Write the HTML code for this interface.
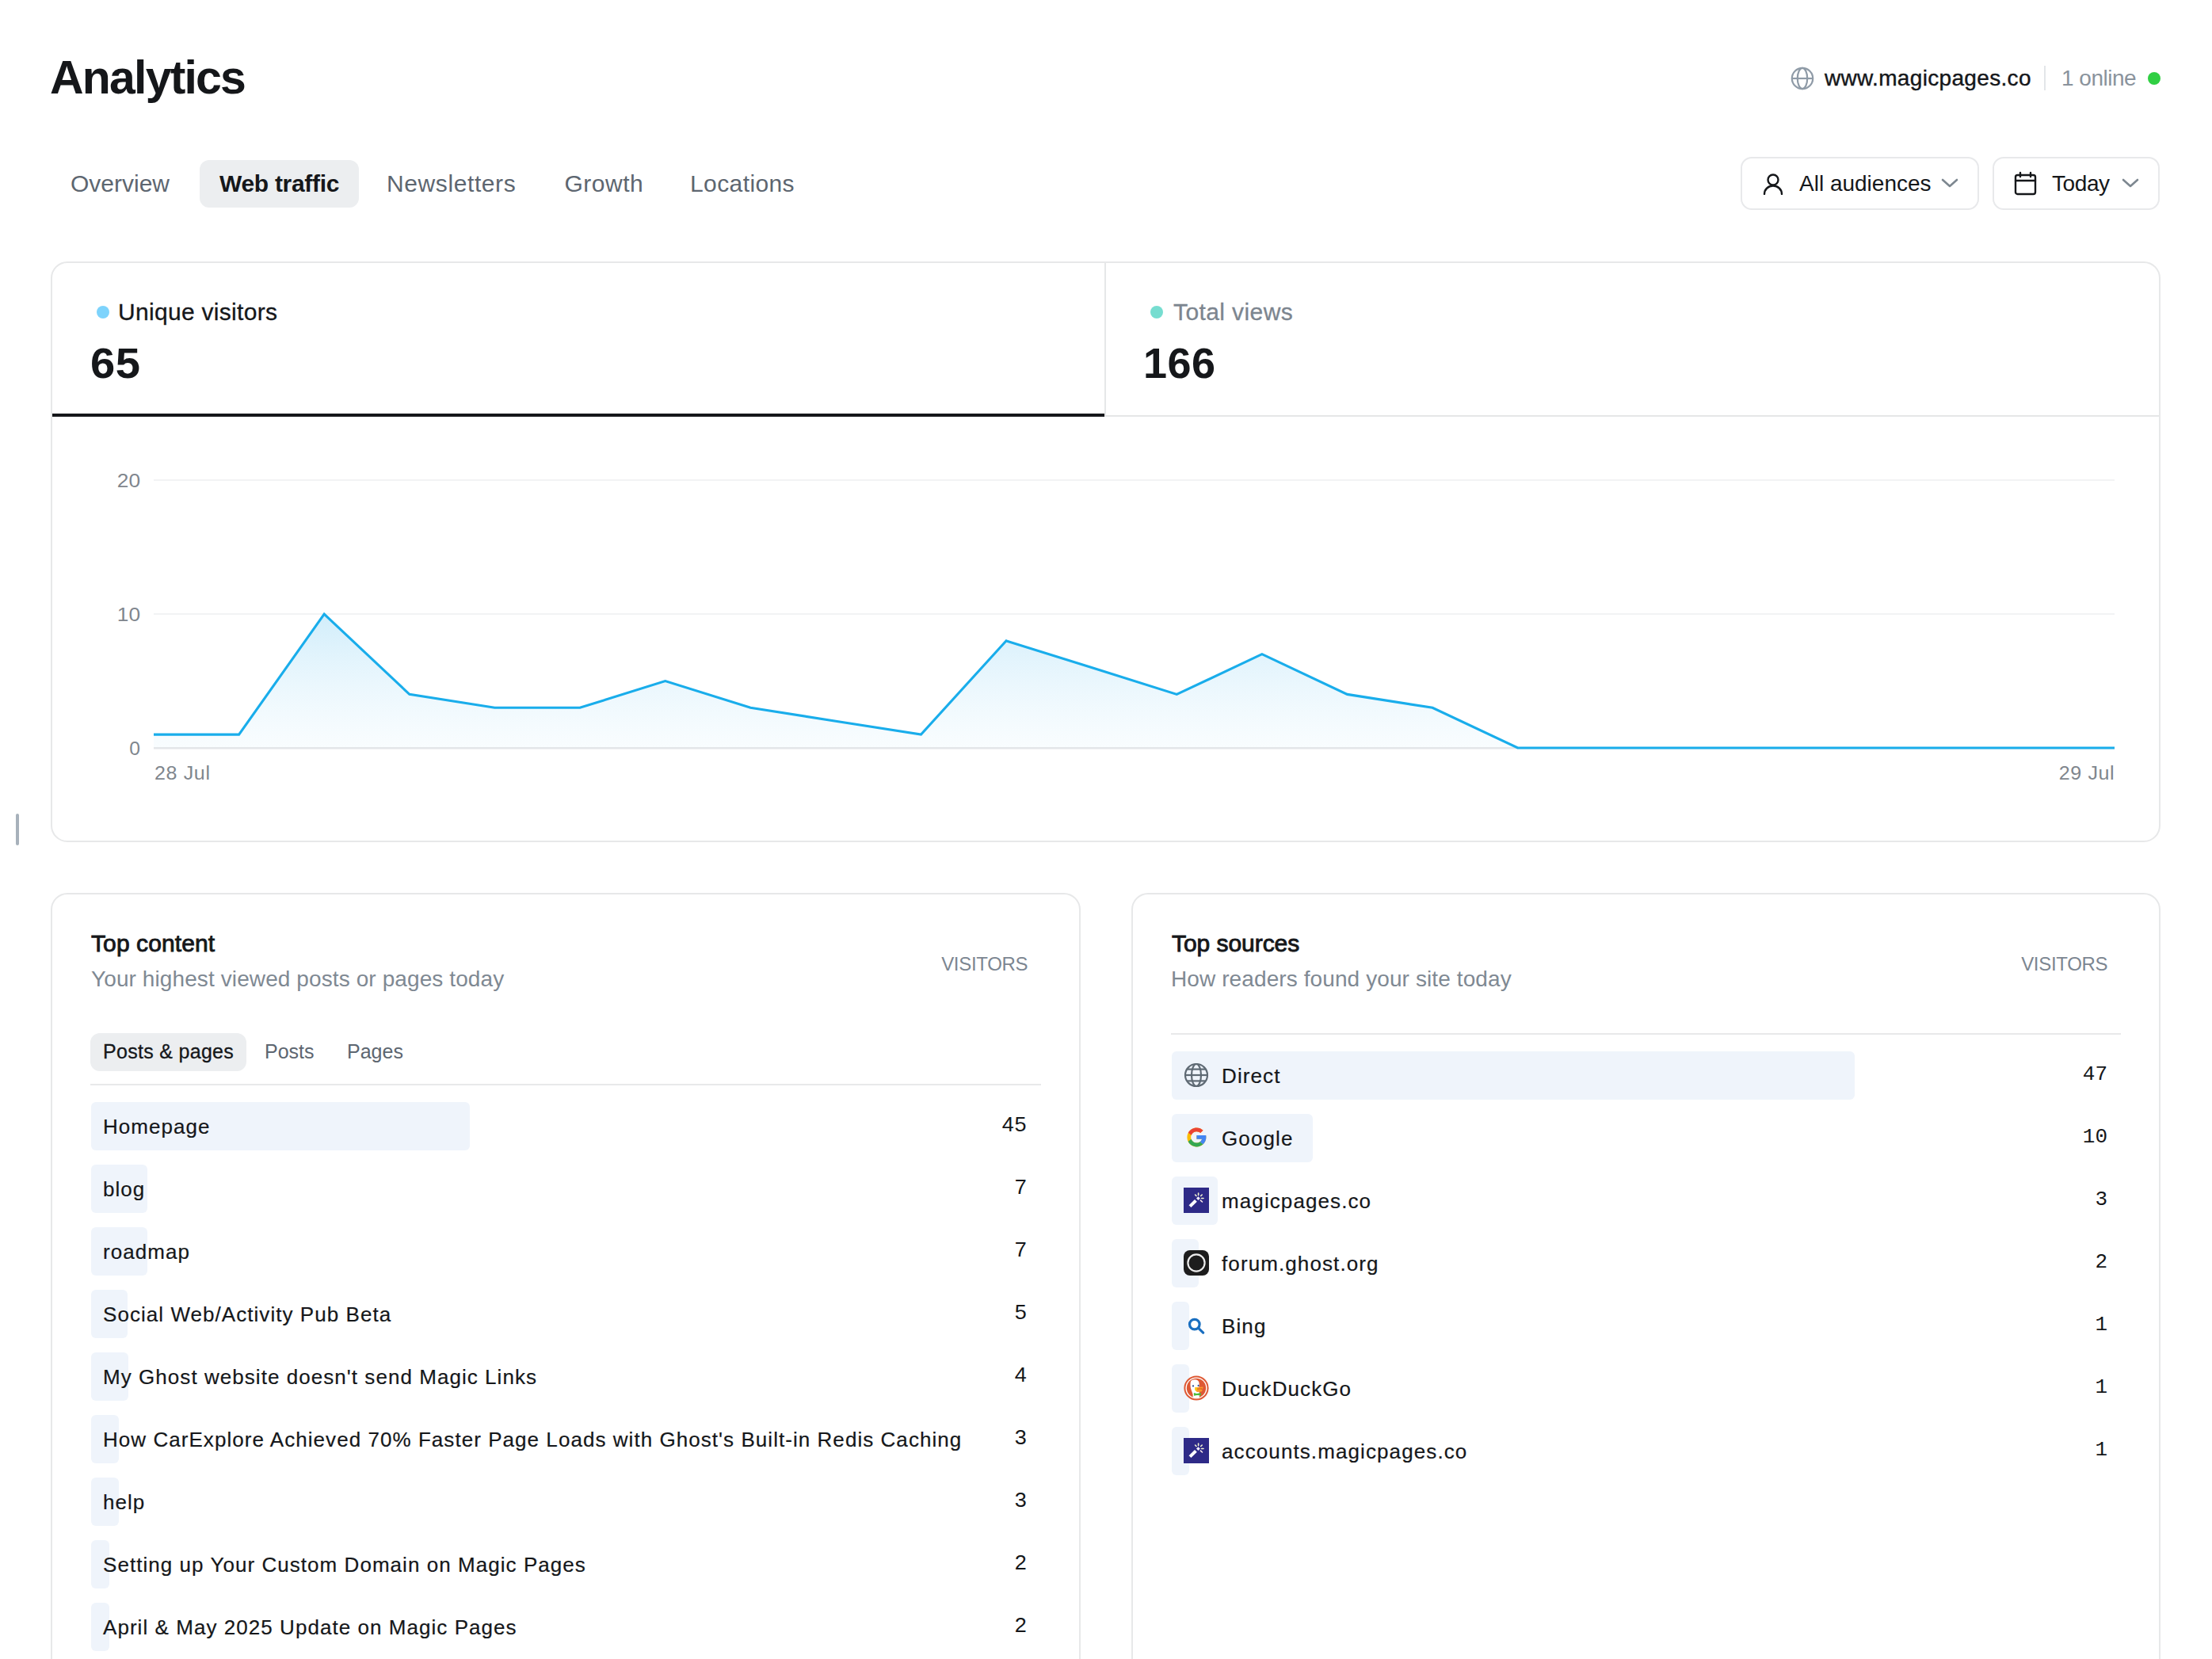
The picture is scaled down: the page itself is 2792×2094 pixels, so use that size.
<!DOCTYPE html>
<html><head><meta charset="utf-8"><title>Analytics</title>
<style>
html,body{margin:0;padding:0;background:#ffffff;}
body{width:2792px;height:2094px;overflow:hidden;position:relative;font-family:"Liberation Sans",sans-serif;}
.t{position:absolute;white-space:nowrap;line-height:1;}
.r{position:absolute;}
</style></head><body>
<div class="t" style="left:63.00px;top:69.04px;font-size:59px;color:#15171a;font-weight:700;letter-spacing:-1.8px;font-family:'Liberation Sans', sans-serif;">Analytics</div>
<svg class="r" style="left:2259px;top:83px" width="32" height="32" viewBox="0 0 32 32"><g fill="none" stroke="#8f9ba7" stroke-width="2.2"><circle cx="16" cy="16" r="13.2"/><ellipse cx="16" cy="16" rx="6.2" ry="13.2"/><line x1="2.8" y1="16" x2="29.2" y2="16"/></g></svg>
<div class="t" style="left:2303.00px;top:85.29px;font-size:28px;color:#15171a;font-weight:400;letter-spacing:0.33px;font-family:'Liberation Sans', sans-serif;-webkit-text-stroke:0.4px #15171a;">www.magicpages.co</div>
<div class="r" style="left:2580px;top:83px;width:2px;height:31px;background:#e3e6e9"></div>
<div class="t" style="left:2602.00px;top:85.29px;font-size:28px;color:#8a939c;font-weight:400;letter-spacing:-0.5px;font-family:'Liberation Sans', sans-serif;">1 online</div>
<div class="r" style="left:2711px;top:91px;width:16px;height:16px;background:#30cf43;border-radius:50%"></div>
<div class="r" style="left:252px;top:202px;width:201px;height:60px;background:#eceef0;border-radius:12px"></div>
<div class="t" style="left:89.00px;top:216.60px;font-size:30px;color:#5d6670;font-weight:400;letter-spacing:0px;font-family:'Liberation Sans', sans-serif;">Overview</div>
<div class="t" style="left:277.00px;top:216.60px;font-size:30px;color:#15171a;font-weight:700;letter-spacing:-0.3px;font-family:'Liberation Sans', sans-serif;">Web traffic</div>
<div class="t" style="left:488.00px;top:216.60px;font-size:30px;color:#5d6670;font-weight:400;letter-spacing:0.6px;font-family:'Liberation Sans', sans-serif;">Newsletters</div>
<div class="t" style="left:712.50px;top:216.60px;font-size:30px;color:#5d6670;font-weight:400;letter-spacing:0.5px;font-family:'Liberation Sans', sans-serif;">Growth</div>
<div class="t" style="left:871.00px;top:216.60px;font-size:30px;color:#5d6670;font-weight:400;letter-spacing:0.4px;font-family:'Liberation Sans', sans-serif;">Locations</div>
<div class="r" style="left:2197px;top:198px;width:301px;height:67px;border:2px solid #e8e9eb;border-radius:14px;box-sizing:border-box"></div>
<div class="r" style="left:2515px;top:198px;width:211px;height:67px;border:2px solid #e8e9eb;border-radius:14px;box-sizing:border-box"></div>
<svg class="r" style="left:2224px;top:218px" width="28" height="28" viewBox="0 0 28 28"><g fill="none" stroke="#15171a" stroke-width="2.4" stroke-linecap="round"><circle cx="14" cy="9" r="6.5"/><path d="M3 27c0-6 5-10.5 11-10.5s11 4.5 11 10.5"/></g></svg>
<div class="t" style="left:2271.00px;top:218.29px;font-size:28px;color:#15171a;font-weight:400;letter-spacing:0px;font-family:'Liberation Sans', sans-serif;">All audiences</div>
<svg class="r" style="left:2450px;top:224px" width="22" height="14" viewBox="0 0 22 14"><path d="M2 3l9 8 9-8" fill="none" stroke="#7d8790" stroke-width="2.6" stroke-linecap="round" stroke-linejoin="round"/></svg>
<svg class="r" style="left:2542px;top:216px" width="30" height="31" viewBox="0 0 30 31"><g fill="none" stroke="#15171a" stroke-width="2.4" stroke-linecap="round"><rect x="2" y="5" width="25" height="24" rx="2.5"/><line x1="2" y1="12" x2="27" y2="12"/><line x1="8" y1="2" x2="8" y2="7"/><line x1="21" y1="2" x2="21" y2="7"/></g></svg>
<div class="t" style="left:2590.00px;top:218.29px;font-size:28px;color:#15171a;font-weight:400;letter-spacing:-0.4px;font-family:'Liberation Sans', sans-serif;">Today</div>
<svg class="r" style="left:2678px;top:224px" width="22" height="14" viewBox="0 0 22 14"><path d="M2 3l9 8 9-8" fill="none" stroke="#7d8790" stroke-width="2.6" stroke-linecap="round" stroke-linejoin="round"/></svg>
<div class="r" style="left:64px;top:330px;width:2663px;height:733px;border:2px solid #e7e8e9;border-radius:21px;box-sizing:border-box"></div>
<div class="r" style="left:66px;top:524px;width:2659px;height:2px;background:#e5e6e7"></div>
<div class="r" style="left:1394px;top:332px;width:2px;height:192px;background:#e6e7e8"></div>
<div class="r" style="left:66px;top:522px;width:1328px;height:4px;background:#15171a"></div>
<div class="r" style="left:122px;top:386px;width:16px;height:16px;background:#7dd3fc;border-radius:50%"></div>
<div class="t" style="left:149.00px;top:378.60px;font-size:30px;color:#15171a;font-weight:400;letter-spacing:0.3px;font-family:'Liberation Sans', sans-serif;-webkit-text-stroke:0.3px #15171a;">Unique visitors</div>
<div class="t" style="left:114.00px;top:432.12px;font-size:53px;color:#15171a;font-weight:700;letter-spacing:0.5px;font-family:'Liberation Sans', sans-serif;transform:scaleX(1.06);transform-origin:left center;">65</div>
<div class="r" style="left:1452px;top:386px;width:16px;height:16px;background:#76ddd0;border-radius:50%"></div>
<div class="t" style="left:1481.00px;top:378.60px;font-size:30px;color:#7c858f;font-weight:400;letter-spacing:0.4px;font-family:'Liberation Sans', sans-serif;-webkit-text-stroke:0.3px #7c858f;">Total views</div>
<div class="t" style="left:1443.00px;top:431.28px;font-size:54px;color:#15171a;font-weight:700;letter-spacing:0.5px;font-family:'Liberation Sans', sans-serif;">166</div>
<div class="r" style="left:194px;top:605px;width:2475px;height:2px;background:#f2f3f4"></div>
<div class="r" style="left:194px;top:774px;width:2475px;height:2px;background:#f2f3f4"></div>
<svg class="r" style="left:65px;top:330px" width="2662" height="733" viewBox="0 0 2662 733"><defs><linearGradient id="g" x1="0" y1="0" x2="0" y2="1" gradientUnits="objectBoundingBox"><stop offset="0" stop-color="#c9eafa" stop-opacity="0.85"/><stop offset="1" stop-color="#eaf7fd" stop-opacity="0.3"/></linearGradient></defs><path d="M129.0,614 L129.0,597.1 L236.6,597.1 L344.2,445.0 L451.8,546.4 L559.4,563.3 L667.0,563.3 L774.7,529.5 L882.3,563.3 L989.9,580.2 L1097.5,597.1 L1205.1,478.8 L1312.7,512.6 L1420.3,546.4 L1527.9,495.7 L1635.5,546.4 L1743.1,563.3 L1850.7,614.0 L1958.3,614.0 L2066.0,614.0 L2173.6,614.0 L2281.2,614.0 L2388.8,614.0 L2496.4,614.0 L2604.0,614.0 L2604.0,614 Z" fill="url(#g)"/><rect x="129" y="613" width="2475" height="2.5" fill="#e3e6e9"/><polyline points="129.0,597.1 236.6,597.1 344.2,445.0 451.8,546.4 559.4,563.3 667.0,563.3 774.7,529.5 882.3,563.3 989.9,580.2 1097.5,597.1 1205.1,478.8 1312.7,512.6 1420.3,546.4 1527.9,495.7 1635.5,546.4 1743.1,563.3 1850.7,614.0 1958.3,614.0 2066.0,614.0 2173.6,614.0 2281.2,614.0 2388.8,614.0 2496.4,614.0 2604.0,614.0" fill="none" stroke="#19adeb" stroke-width="3.1" stroke-linejoin="miter"/></svg>
<div class="t" style="right:2615.00px;top:596.10px;font-size:23.5px;color:#7f868d;font-weight:400;letter-spacing:0px;font-family:'Liberation Sans', sans-serif;transform:scaleX(1.12);transform-origin:right center;">20</div>
<div class="t" style="right:2615.00px;top:765.10px;font-size:23.5px;color:#7f868d;font-weight:400;letter-spacing:0px;font-family:'Liberation Sans', sans-serif;transform:scaleX(1.12);transform-origin:right center;">10</div>
<div class="t" style="right:2615.00px;top:934.10px;font-size:23.5px;color:#7f868d;font-weight:400;letter-spacing:0px;font-family:'Liberation Sans', sans-serif;transform:scaleX(1.05);transform-origin:right center;">0</div>
<div class="t" style="left:195.00px;top:964.60px;font-size:23.5px;color:#7f868d;font-weight:400;letter-spacing:0.6px;font-family:'Liberation Sans', sans-serif;transform:scaleX(1.065);transform-origin:left center;">28 Jul</div>
<div class="t" style="right:122.50px;top:964.60px;font-size:23.5px;color:#7f868d;font-weight:400;letter-spacing:0.6px;font-family:'Liberation Sans', sans-serif;transform:scaleX(1.065);transform-origin:right center;">29 Jul</div>
<div class="r" style="left:20px;top:1027px;width:4px;height:40px;background:#a7b1bb;border-radius:2px"></div>
<div class="r" style="left:64px;top:1127px;width:1300px;height:1073px;border:2px solid #e7e8e9;border-radius:21px;box-sizing:border-box"></div>
<div class="r" style="left:1428px;top:1127px;width:1299px;height:1073px;border:2px solid #e7e8e9;border-radius:21px;box-sizing:border-box"></div>
<div class="t" style="left:115.00px;top:1175.60px;font-size:30px;color:#15171a;font-weight:400;letter-spacing:0.1px;font-family:'Liberation Sans', sans-serif;-webkit-text-stroke:0.9px #15171a;">Top content</div>
<div class="t" style="left:115.00px;top:1222.29px;font-size:28px;color:#7f8993;font-weight:400;letter-spacing:0.1px;font-family:'Liberation Sans', sans-serif;">Your highest viewed posts or pages today</div>
<div class="t" style="right:1494.70px;top:1204.68px;font-size:24px;color:#7c8691;font-weight:400;letter-spacing:-0.3px;font-family:'Liberation Sans', sans-serif;">VISITORS</div>
<div class="r" style="left:114px;top:1304px;width:197px;height:48px;background:#eceef0;border-radius:12px"></div>
<div class="t" style="left:130.00px;top:1314.83px;font-size:25px;color:#15171a;font-weight:400;letter-spacing:0.3px;font-family:'Liberation Sans', sans-serif;-webkit-text-stroke:0.3px #15171a;">Posts &amp; pages</div>
<div class="t" style="left:334.00px;top:1314.83px;font-size:25px;color:#5d6670;font-weight:400;letter-spacing:0px;font-family:'Liberation Sans', sans-serif;">Posts</div>
<div class="t" style="left:438.00px;top:1314.83px;font-size:25px;color:#5d6670;font-weight:400;letter-spacing:0px;font-family:'Liberation Sans', sans-serif;">Pages</div>
<div class="r" style="left:114px;top:1368px;width:1200px;height:2px;background:#e8e9ea"></div>
<div class="r" style="left:115px;top:1390.5px;width:478px;height:61.0px;background:#eff4fb;border-radius:6px"></div>
<div class="t" style="left:130.00px;top:1408.99px;font-size:26px;color:#15171a;font-weight:400;letter-spacing:1.05px;font-family:'Liberation Sans', sans-serif;-webkit-text-stroke:0.2px #15171a;">Homepage</div>
<div class="t" style="right:1495.50px;top:1406.83px;font-size:25px;color:#15171a;font-weight:400;letter-spacing:0.8px;font-family:'Liberation Sans', sans-serif;transform:scaleX(1.08);transform-origin:right center;">45</div>
<div class="r" style="left:115px;top:1469.6px;width:70.5px;height:61.0px;background:#eff4fb;border-radius:6px"></div>
<div class="t" style="left:130.00px;top:1488.05px;font-size:26px;color:#15171a;font-weight:400;letter-spacing:1.05px;font-family:'Liberation Sans', sans-serif;-webkit-text-stroke:0.2px #15171a;">blog</div>
<div class="t" style="right:1495.50px;top:1485.89px;font-size:25px;color:#15171a;font-weight:400;letter-spacing:0.8px;font-family:'Liberation Sans', sans-serif;transform:scaleX(1.08);transform-origin:right center;">7</div>
<div class="r" style="left:115px;top:1548.6px;width:70.5px;height:61.0px;background:#eff4fb;border-radius:6px"></div>
<div class="t" style="left:130.00px;top:1567.11px;font-size:26px;color:#15171a;font-weight:400;letter-spacing:1.05px;font-family:'Liberation Sans', sans-serif;-webkit-text-stroke:0.2px #15171a;">roadmap</div>
<div class="t" style="right:1495.50px;top:1564.95px;font-size:25px;color:#15171a;font-weight:400;letter-spacing:0.8px;font-family:'Liberation Sans', sans-serif;transform:scaleX(1.08);transform-origin:right center;">7</div>
<div class="r" style="left:115px;top:1627.7px;width:46px;height:61.0px;background:#eff4fb;border-radius:6px"></div>
<div class="t" style="left:130.00px;top:1646.17px;font-size:26px;color:#15171a;font-weight:400;letter-spacing:1.05px;font-family:'Liberation Sans', sans-serif;-webkit-text-stroke:0.2px #15171a;">Social Web/Activity Pub Beta</div>
<div class="t" style="right:1495.50px;top:1644.01px;font-size:25px;color:#15171a;font-weight:400;letter-spacing:0.8px;font-family:'Liberation Sans', sans-serif;transform:scaleX(1.08);transform-origin:right center;">5</div>
<div class="r" style="left:115px;top:1706.7px;width:46.80000000000001px;height:61.0px;background:#eff4fb;border-radius:6px"></div>
<div class="t" style="left:130.00px;top:1725.23px;font-size:26px;color:#15171a;font-weight:400;letter-spacing:1.05px;font-family:'Liberation Sans', sans-serif;-webkit-text-stroke:0.2px #15171a;">My Ghost website doesn't send Magic Links</div>
<div class="t" style="right:1495.50px;top:1723.07px;font-size:25px;color:#15171a;font-weight:400;letter-spacing:0.8px;font-family:'Liberation Sans', sans-serif;transform:scaleX(1.08);transform-origin:right center;">4</div>
<div class="r" style="left:115px;top:1785.8px;width:35px;height:61.0px;background:#eff4fb;border-radius:6px"></div>
<div class="t" style="left:130.00px;top:1804.29px;font-size:26px;color:#15171a;font-weight:400;letter-spacing:1.05px;font-family:'Liberation Sans', sans-serif;-webkit-text-stroke:0.2px #15171a;">How CarExplore Achieved 70% Faster Page Loads with Ghost's Built-in Redis Caching</div>
<div class="t" style="right:1495.50px;top:1802.13px;font-size:25px;color:#15171a;font-weight:400;letter-spacing:0.8px;font-family:'Liberation Sans', sans-serif;transform:scaleX(1.08);transform-origin:right center;">3</div>
<div class="r" style="left:115px;top:1864.9px;width:34.5px;height:61.0px;background:#eff4fb;border-radius:6px"></div>
<div class="t" style="left:130.00px;top:1883.35px;font-size:26px;color:#15171a;font-weight:400;letter-spacing:1.05px;font-family:'Liberation Sans', sans-serif;-webkit-text-stroke:0.2px #15171a;">help</div>
<div class="t" style="right:1495.50px;top:1881.19px;font-size:25px;color:#15171a;font-weight:400;letter-spacing:0.8px;font-family:'Liberation Sans', sans-serif;transform:scaleX(1.08);transform-origin:right center;">3</div>
<div class="r" style="left:115px;top:1943.9px;width:23px;height:61.0px;background:#eff4fb;border-radius:6px"></div>
<div class="t" style="left:130.00px;top:1962.41px;font-size:26px;color:#15171a;font-weight:400;letter-spacing:1.05px;font-family:'Liberation Sans', sans-serif;-webkit-text-stroke:0.2px #15171a;">Setting up Your Custom Domain on Magic Pages</div>
<div class="t" style="right:1495.50px;top:1960.25px;font-size:25px;color:#15171a;font-weight:400;letter-spacing:0.8px;font-family:'Liberation Sans', sans-serif;transform:scaleX(1.08);transform-origin:right center;">2</div>
<div class="r" style="left:115px;top:2023.0px;width:23px;height:61.0px;background:#eff4fb;border-radius:6px"></div>
<div class="t" style="left:130.00px;top:2041.47px;font-size:26px;color:#15171a;font-weight:400;letter-spacing:1.05px;font-family:'Liberation Sans', sans-serif;-webkit-text-stroke:0.2px #15171a;">April &amp; May 2025 Update on Magic Pages</div>
<div class="t" style="right:1495.50px;top:2039.31px;font-size:25px;color:#15171a;font-weight:400;letter-spacing:0.8px;font-family:'Liberation Sans', sans-serif;transform:scaleX(1.08);transform-origin:right center;">2</div>
<div class="t" style="left:1479.00px;top:1175.60px;font-size:30px;color:#15171a;font-weight:400;letter-spacing:-0.05px;font-family:'Liberation Sans', sans-serif;-webkit-text-stroke:0.9px #15171a;">Top sources</div>
<div class="t" style="left:1478.00px;top:1222.29px;font-size:28px;color:#7f8993;font-weight:400;letter-spacing:0.1px;font-family:'Liberation Sans', sans-serif;">How readers found your site today</div>
<div class="t" style="right:131.70px;top:1204.68px;font-size:24px;color:#7c8691;font-weight:400;letter-spacing:-0.3px;font-family:'Liberation Sans', sans-serif;">VISITORS</div>
<div class="r" style="left:1478px;top:1304px;width:1199px;height:2px;background:#e8e9ea"></div>
<div class="r" style="left:1479px;top:1327.0px;width:862px;height:61.0px;background:#eff4fb;border-radius:6px"></div>
<div class="t" style="left:1542.00px;top:1344.99px;font-size:26px;color:#15171a;font-weight:400;letter-spacing:1.1px;font-family:'Liberation Sans', sans-serif;-webkit-text-stroke:0.2px #15171a;">Direct</div>
<div class="t" style="right:132.00px;top:1342.58px;font-size:26px;color:#15171a;font-weight:400;letter-spacing:0px;font-family:'Liberation Mono', monospace;">47</div>
<svg class="r" style="left:1494px;top:1341px" width="32" height="32" viewBox="0 0 32 32"><g fill="none" stroke="#5f6a74" stroke-width="2.2"><circle cx="16" cy="16" r="14"/><ellipse cx="16" cy="16" rx="6" ry="14"/><line x1="4.5" y1="8.6" x2="27.5" y2="8.6"/><line x1="2" y1="16" x2="30" y2="16"/><line x1="4.5" y1="23.4" x2="27.5" y2="23.4"/></g></svg>
<div class="r" style="left:1479px;top:1406.1px;width:178px;height:61.0px;background:#eff4fb;border-radius:6px"></div>
<div class="t" style="left:1542.00px;top:1424.05px;font-size:26px;color:#15171a;font-weight:400;letter-spacing:1.1px;font-family:'Liberation Sans', sans-serif;-webkit-text-stroke:0.2px #15171a;">Google</div>
<div class="t" style="right:132.00px;top:1421.64px;font-size:26px;color:#15171a;font-weight:400;letter-spacing:0px;font-family:'Liberation Mono', monospace;">10</div>
<svg class="r" style="left:1495.6px;top:1421.2px" width="28.8" height="28.8" viewBox="0 0 48 48"><path fill="#FBBC05" d="M43.611,20.083H42V20H24v8h11.303c-1.649,4.657-6.08,8-11.303,8c-6.627,0-12-5.373-12-12c0-6.627,5.373-12,12-12c3.059,0,5.842,1.154,7.961,3.039l5.657-5.657C34.046,6.053,29.268,4,24,4C12.955,4,4,12.955,4,24c0,11.045,8.955,20,20,20c11.045,0,20-8.955,20-20C44,22.659,43.862,21.35,43.611,20.083z"/><path fill="#EA4335" d="M6.306,14.691l6.571,4.819C14.655,15.108,18.961,12,24,12c3.059,0,5.842,1.154,7.961,3.039l5.657-5.657C34.046,6.053,29.268,4,24,4C16.318,4,9.656,8.337,6.306,14.691z"/><path fill="#34A853" d="M24,44c5.166,0,9.86-1.977,13.409-5.192l-6.19-5.238C29.211,35.091,26.715,36,24,36c-5.202,0-9.619-3.317-11.283-7.946l-6.522,5.025C9.505,39.556,16.227,44,24,44z"/><path fill="#4285F4" d="M43.611,20.083H42V20H24v8h11.303c-0.792,2.237-2.231,4.166-4.087,5.571c0.001-0.001,0.002-0.001,0.003-0.002l6.19,5.238C36.971,39.205,44,34,44,24C44,22.659,43.862,21.35,43.611,20.083z"/></svg>
<div class="r" style="left:1479px;top:1485.1px;width:57.5px;height:61.0px;background:#eff4fb;border-radius:6px"></div>
<div class="t" style="left:1542.00px;top:1503.11px;font-size:26px;color:#15171a;font-weight:400;letter-spacing:1.1px;font-family:'Liberation Sans', sans-serif;-webkit-text-stroke:0.2px #15171a;">magicpages.co</div>
<div class="t" style="right:132.00px;top:1500.70px;font-size:26px;color:#15171a;font-weight:400;letter-spacing:0px;font-family:'Liberation Mono', monospace;">3</div>
<svg class="r" style="left:1494px;top:1499px" width="32" height="32" viewBox="0 0 32 32"><rect width="32" height="32" fill="#2e2a87"/><path d="M8 23.7L15.4 16.3" stroke="#fff" stroke-width="4"/><path d="M18.4 11.2L20.8 13.6 18.4 16 16 13.6z" fill="#f4f0ff"/><g stroke="#f3f5d0" stroke-width="1.6" stroke-linecap="round"><line x1="18.6" y1="7" x2="18.6" y2="9.6"/><line x1="14.6" y1="9" x2="16" y2="10.5"/><line x1="21.7" y1="10.5" x2="23.2" y2="9"/><line x1="22.5" y1="13.5" x2="25" y2="13.5"/></g><line x1="21.4" y1="16.1" x2="23.5" y2="18" stroke="#f8e8e8" stroke-width="1.6" stroke-linecap="round"/></svg>
<div class="r" style="left:1479px;top:1564.2px;width:34px;height:61.0px;background:#eff4fb;border-radius:6px"></div>
<div class="t" style="left:1542.00px;top:1582.17px;font-size:26px;color:#15171a;font-weight:400;letter-spacing:1.1px;font-family:'Liberation Sans', sans-serif;-webkit-text-stroke:0.2px #15171a;">forum.ghost.org</div>
<div class="t" style="right:132.00px;top:1579.76px;font-size:26px;color:#15171a;font-weight:400;letter-spacing:0px;font-family:'Liberation Mono', monospace;">2</div>
<svg class="r" style="left:1494px;top:1578px" width="32" height="32" viewBox="0 0 32 32"><rect width="32" height="32" rx="8" fill="#1d1d1d"/><circle cx="16" cy="16" r="10.6" fill="#1d1d1d" stroke="#ececec" stroke-width="2.2"/></svg>
<div class="r" style="left:1479px;top:1643.2px;width:22px;height:61.0px;background:#eff4fb;border-radius:6px"></div>
<div class="t" style="left:1542.00px;top:1661.23px;font-size:26px;color:#15171a;font-weight:400;letter-spacing:1.1px;font-family:'Liberation Sans', sans-serif;-webkit-text-stroke:0.2px #15171a;">Bing</div>
<div class="t" style="right:132.00px;top:1658.82px;font-size:26px;color:#15171a;font-weight:400;letter-spacing:0px;font-family:'Liberation Mono', monospace;">1</div>
<svg class="r" style="left:1499px;top:1663.4px" width="22" height="21" viewBox="0 0 22 21"><g fill="none" stroke="#1a6fc0" stroke-width="3.2" stroke-linecap="round"><circle cx="8.8" cy="8.6" r="6.3"/><line x1="13.6" y1="13.4" x2="19.6" y2="19.2"/></g></svg>
<div class="r" style="left:1479px;top:1722.3px;width:22px;height:61.0px;background:#eff4fb;border-radius:6px"></div>
<div class="t" style="left:1542.00px;top:1740.29px;font-size:26px;color:#15171a;font-weight:400;letter-spacing:1.1px;font-family:'Liberation Sans', sans-serif;-webkit-text-stroke:0.2px #15171a;">DuckDuckGo</div>
<div class="t" style="right:132.00px;top:1737.88px;font-size:26px;color:#15171a;font-weight:400;letter-spacing:0px;font-family:'Liberation Mono', monospace;">1</div>
<svg class="r" style="left:1494px;top:1736px" width="32" height="32" viewBox="0 0 32 32"><defs><clipPath id="dd"><circle cx="16" cy="16" r="12.2"/></clipPath></defs><circle cx="16" cy="16" r="15.6" fill="#de5833"/><circle cx="16" cy="16" r="13.6" fill="#fff"/><circle cx="16" cy="16" r="12.2" fill="#de5833"/><g clip-path="url(#dd)"><path d="M9.2 7.2c2.5-2.6 8-2.8 9.8 0.6 1.2 2.4 0.6 5.2 0.4 7.4-0.3 3.2 0.3 6 0.8 9l-1 8h-8l0.5-8c-1.2-4-3.2-7.5-3.2-11.5 0-2.5 0.1-4.2 0.7-5.5z" fill="#fff"/></g><circle cx="12" cy="13.4" r="1.15" fill="#2d4f8e"/><circle cx="18.6" cy="12.9" r="1.05" fill="#2d4f8e"/><path d="M14.3 15.2l10.2-0.8-0.2 2.2-3.6 0.9 3.2 0.4-1.2 2.6-5.8 0.5-2.4-2.2z" fill="#fb9a2c"/><path d="M14.3 15.2l2.2-0.1 0.2 5.3-2.2-2.1z" fill="#fdd20a"/><path d="M17.2 17.2l5.8-0.5" stroke="#d9661c" stroke-width="1"/><path d="M12.8 22.1l3.8 0.9 5-0.9 0.3 3.5-4.8-0.7-4.1 0.8z" fill="#4cba3c"/></svg>
<div class="r" style="left:1479px;top:1801.4px;width:22px;height:61.0px;background:#eff4fb;border-radius:6px"></div>
<div class="t" style="left:1542.00px;top:1819.35px;font-size:26px;color:#15171a;font-weight:400;letter-spacing:1.1px;font-family:'Liberation Sans', sans-serif;-webkit-text-stroke:0.2px #15171a;">accounts.magicpages.co</div>
<div class="t" style="right:132.00px;top:1816.94px;font-size:26px;color:#15171a;font-weight:400;letter-spacing:0px;font-family:'Liberation Mono', monospace;">1</div>
<svg class="r" style="left:1494px;top:1815px" width="32" height="32" viewBox="0 0 32 32"><rect width="32" height="32" fill="#2e2a87"/><path d="M8 23.7L15.4 16.3" stroke="#fff" stroke-width="4"/><path d="M18.4 11.2L20.8 13.6 18.4 16 16 13.6z" fill="#f4f0ff"/><g stroke="#f3f5d0" stroke-width="1.6" stroke-linecap="round"><line x1="18.6" y1="7" x2="18.6" y2="9.6"/><line x1="14.6" y1="9" x2="16" y2="10.5"/><line x1="21.7" y1="10.5" x2="23.2" y2="9"/><line x1="22.5" y1="13.5" x2="25" y2="13.5"/></g><line x1="21.4" y1="16.1" x2="23.5" y2="18" stroke="#f8e8e8" stroke-width="1.6" stroke-linecap="round"/></svg>
<script>(function(){var w=window.innerWidth;if(w>0&&w<2400){document.documentElement.style.zoom=(w/2792);}})();</script>
</body></html>
